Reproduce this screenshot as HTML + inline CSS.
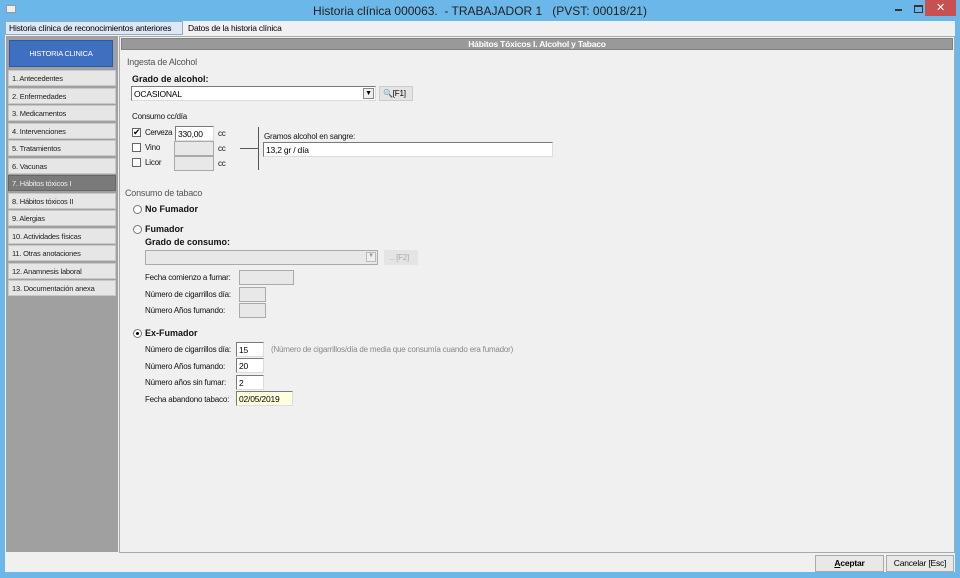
<!DOCTYPE html>
<html><head><meta charset="utf-8"><style>
*{margin:0;padding:0;box-sizing:border-box}
body{width:960px;height:578px;background:#6cb7ea;font-family:"Liberation Sans",sans-serif;font-size:8px;color:#000;position:relative;overflow:hidden;letter-spacing:-0.2px}
.a{position:absolute;white-space:nowrap}
.inp{position:absolute;background:#fff;border:1px solid #7a7a7a;border-right-color:#ddd;border-bottom-color:#ddd;font-size:8.5px;padding:2px 2px;line-height:10px;height:15px;white-space:nowrap}
.dis{background:#e8e8e8;border-color:#aaa}
.lbl{position:absolute;font-size:8px;color:#111;white-space:nowrap}
.b{font-weight:bold;font-size:9px;letter-spacing:0}
.side{position:absolute;left:8px;width:108px;height:16px;background:#e6e6e6;border:1px solid #c8c8c8;font-size:7.5px;padding:3px 3px;color:#222;white-space:nowrap}
.rad{position:absolute;width:9px;height:9px;border-radius:50%;border:1px solid #777;background:#fff}
.chk{position:absolute;width:9px;height:9px;border:1px solid #666;background:#fff}
</style></head><body>
<div class="a" style="left:6px;top:5px;width:10px;height:8px;background:#eee;border:1px solid #999"></div>
<div class="a" style="left:0;top:4px;width:960px;text-align:center;font-size:12px;color:#222;letter-spacing:0">Historia clínica 000063. &nbsp;- TRABAJADOR 1 &nbsp;&nbsp;(PVST: 00018/21)</div>
<div class="a" style="left:895px;top:9px;width:7px;height:2px;background:#333"></div>
<div class="a" style="left:914px;top:5px;width:9px;height:8px;border:1px solid #333;border-top-width:2px"></div>
<div class="a" style="left:925px;top:0;width:31px;height:16px;background:#c75050;color:#fff;text-align:center;font-size:11px;line-height:16px">✕</div>
<div class="a" style="left:5px;top:21px;width:950px;height:551px;background:#f0f0f0"></div>
<div class="a" style="left:5px;top:21px;width:178px;height:14px;background:#dce8f5;border:1px solid #9ab;font-size:8.5px;padding:1px 3px">Historia clínica de reconocimientos anteriores</div>
<div class="a" style="left:188px;top:23px;font-size:8.5px">Datos de la historia clínica</div>
<div class="a" style="left:6px;top:36px;width:112px;height:516px;background:#a0a0a0"></div>
<div class="a" style="left:9px;top:40px;width:104px;height:27px;background:#3e6fc0;border:1px solid #2b5aa8;color:#fff;font-size:7.5px;text-align:center;line-height:25px">HISTORIA CLINICA</div>
<div class="side" style="top:70px">1. Antecedentes</div>
<div class="side" style="top:87.5px">2. Enfermedades</div>
<div class="side" style="top:105px">3. Medicamentos</div>
<div class="side" style="top:122.5px">4. Intervenciones</div>
<div class="side" style="top:140px">5. Tratamientos</div>
<div class="side" style="top:157.5px">6. Vacunas</div>
<div class="side" style="top:175px;background:#7a7a7a;color:#eee;border-color:#666">7. Hábitos tóxicos I</div>
<div class="side" style="top:192.5px">8. Hábitos tóxicos II</div>
<div class="side" style="top:210px">9. Alergias</div>
<div class="side" style="top:227.5px">10. Actividades físicas</div>
<div class="side" style="top:245px">11. Otras anotaciones</div>
<div class="side" style="top:262.5px">12. Anamnesis laboral</div>
<div class="side" style="top:280px">13. Documentación anexa</div>
<div class="a" style="left:119px;top:36px;width:836px;height:517px;background:#f0f0f0;border:1px solid #aaa"></div>
<div class="a" style="left:121px;top:38px;width:832px;height:12px;background:#999;border:1px solid #808080;color:#fff;font-weight:bold;font-size:8.5px;text-align:center;line-height:10px">Hábitos Tóxicos I. Alcohol y Tabaco</div>
<div class="lbl" style="left:127px;top:57px;color:#555;font-size:9px">Ingesta de Alcohol</div>
<div class="lbl b" style="left:132px;top:74px">Grado de alcohol:</div>
<div class="inp" style="left:131px;top:86px;width:245px">OCASIONAL</div>
<div class="a" style="left:363px;top:88px;width:11px;height:11px;background:#eee;border:1px solid #888;font-size:7px;text-align:center;line-height:10px">▼</div>
<div class="a" style="left:379px;top:86px;width:34px;height:15px;background:#e4e4e4;border:1px solid #ccc;font-size:8px;padding:2px 3px">🔍[F1]</div>
<div class="lbl" style="left:132px;top:112px">Consumo cc/día</div>
<div class="chk" style="left:132px;top:128px;font-size:9px;line-height:7px">✔</div>
<div class="lbl" style="left:145px;top:128px;letter-spacing:-0.4px">Cerveza</div>
<div class="inp" style="left:175px;top:126px;width:39px">330,00</div>
<div class="lbl" style="left:218px;top:129px">cc</div>
<div class="chk" style="left:132px;top:143px"></div>
<div class="lbl" style="left:145px;top:143px">Vino</div>
<div class="inp dis" style="left:174px;top:141px;width:40px"></div>
<div class="lbl" style="left:218px;top:144px">cc</div>
<div class="chk" style="left:132px;top:158px"></div>
<div class="lbl" style="left:145px;top:158px">Licor</div>
<div class="inp dis" style="left:174px;top:156px;width:40px"></div>
<div class="lbl" style="left:218px;top:159px">cc</div>
<div class="a" style="left:240px;top:148px;width:19px;height:1px;background:#555"></div>
<div class="a" style="left:258px;top:127px;width:1px;height:43px;background:#555"></div>
<div class="lbl" style="left:264px;top:132px">Gramos alcohol en sangre:</div>
<div class="inp" style="left:263px;top:142px;width:290px">13,2 gr / día</div>
<div class="lbl" style="left:125px;top:188px;color:#555;font-size:9px">Consumo de tabaco</div>
<div class="rad" style="left:133px;top:205px"></div>
<div class="lbl b" style="left:145px;top:204px">No Fumador</div>
<div class="rad" style="left:133px;top:225px"></div>
<div class="lbl b" style="left:145px;top:224px">Fumador</div>
<div class="lbl b" style="left:145px;top:237px">Grado de consumo:</div>
<div class="inp dis" style="left:145px;top:250px;width:233px"></div>
<div class="a" style="left:366px;top:252px;width:10px;height:10px;background:#eee;border:1px solid #bbb;font-size:6px;color:#999;text-align:center">▼</div>
<div class="a" style="left:384px;top:250px;width:34px;height:15px;background:#e4e4e4;font-size:8px;color:#aaa;padding:3px 6px">.. [F2]</div>
<div class="lbl" style="left:145px;top:273px">Fecha comienzo a fumar:</div>
<div class="inp dis" style="left:239px;top:270px;width:55px"></div>
<div class="lbl" style="left:145px;top:290px">Número de cigarrillos día:</div>
<div class="inp dis" style="left:239px;top:287px;width:27px"></div>
<div class="lbl" style="left:145px;top:306px">Número Años fumando:</div>
<div class="inp dis" style="left:239px;top:303px;width:27px"></div>
<div class="rad" style="left:133px;top:329px"><div class="a" style="left:2px;top:2px;width:3px;height:3px;border-radius:50%;background:#000"></div></div>
<div class="lbl b" style="left:145px;top:328px">Ex-Fumador</div>
<div class="lbl" style="left:145px;top:345px">Número de cigarrillos día:</div>
<div class="inp" style="left:236px;top:342px;width:28px">15</div>
<div class="lbl" style="left:271px;top:345px;color:#888">(Número de cigarrillos/día de media que consumía cuando era fumador)</div>
<div class="lbl" style="left:145px;top:362px">Número Años fumando:</div>
<div class="inp" style="left:236px;top:358px;width:28px">20</div>
<div class="lbl" style="left:145px;top:378px">Número años sin fumar:</div>
<div class="inp" style="left:236px;top:375px;width:28px">2</div>
<div class="lbl" style="left:145px;top:395px">Fecha abandono tabaco:</div>
<div class="inp" style="left:236px;top:391px;width:57px;background:#ffffe0">02/05/2019</div>
<div class="a" style="left:815px;top:555px;width:69px;height:17px;background:#e8e8e8;border:1px solid #aaa;font-weight:bold;font-size:8.5px;text-align:center;line-height:15px"><u>A</u>ceptar</div>
<div class="a" style="left:886px;top:555px;width:68px;height:17px;background:#e8e8e8;border:1px solid #aaa;font-size:8.5px;text-align:center;line-height:15px">Cancelar [Esc]</div>
</body></html>
